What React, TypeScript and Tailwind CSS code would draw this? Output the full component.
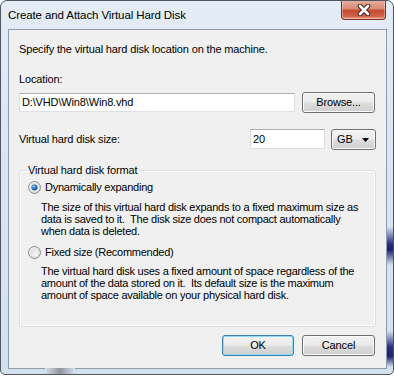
import React from "react";

const font = { fontFamily: '"Liberation Sans", Arial, sans-serif' };

const Radio = ({ checked }: { checked?: boolean }) => (
  <svg width="13" height="13" viewBox="0 0 13 13" className="shrink-0">
    <defs>
      <linearGradient id={checked ? "rOutA" : "rOutB"} x1="0" y1="0" x2="1" y2="1">
        <stop offset="0" stopColor="#f6f6f6" />
        <stop offset="1" stopColor="#d2d2d2" />
      </linearGradient>
      <linearGradient id="rIn" x1="0" y1="0" x2="1" y2="1">
        <stop offset="0" stopColor="#d9d9d9" />
        <stop offset="1" stopColor="#fafafa" />
      </linearGradient>
      <radialGradient id="rDot" cx="0.35" cy="0.3" r="0.75">
        <stop offset="0" stopColor="#b9ecff" />
        <stop offset="0.45" stopColor="#2a8ad4" />
        <stop offset="1" stopColor="#0d3f86" />
      </radialGradient>
    </defs>
    <circle cx="6.5" cy="6.5" r="6" fill={`url(#${checked ? "rOutA" : "rOutB"})`} stroke="#8c8c8c" strokeWidth="1" />
    <circle cx="6.5" cy="6.5" r="4" fill="url(#rIn)" />
    {checked && <circle cx="6.5" cy="6.5" r="2.8" fill="url(#rDot)" stroke="#1b4f8e" strokeWidth="0.5" />}
  </svg>
);

const Btn = ({ label, def, className }: { label: string; def?: boolean; className?: string }) => (
  <div
    className={`flex items-center justify-center h-[21px] rounded-[3px] border text-[11px] text-black bg-[linear-gradient(to_bottom,#f2f2f2_0%,#ebebeb_48%,#dddddd_52%,#cfcfcf_100%)] ${
      def
        ? "border-[#3c7fb1] shadow-[inset_0_0_0_1px_#8fdcf8]"
        : "border-[#707070] shadow-[inset_0_0_0_1px_#fbfbfb]"
    } ${className ?? ""}`}
  >
    {label}
  </div>
);

export default function App() {
  return (
    <div className="w-[394px] h-[376px] bg-white" style={font}>
      <div className="relative w-[394px] h-[375px] flex flex-col border border-[#4d5661] rounded-t-[7px] rounded-b-[5px] bg-[linear-gradient(to_bottom,#e4ecf6_0%,#dbe6f2_40%,#d3e0ee_100%)] overflow-hidden">
        {/* frame reflections */}
        <div className="absolute right-0 top-[226px] w-[6px] h-[38px] bg-[linear-gradient(to_bottom,#d3e0ee,#25307e_45%,#1a2470_60%,#d3e0ee)]" />
        <div className="absolute right-0 top-[330px] w-[6px] h-[36px] bg-[linear-gradient(to_bottom,#d3e0ee,#25307e_45%,#1a2470_70%,#d3e0ee)]" />
        <div className="absolute left-[44px] bottom-0 w-[30px] h-[6px] bg-[linear-gradient(to_right,#d3e0ee,#8f949b_50%,#d3e0ee)]" />

        {/* title bar */}
        <div className="flex items-start justify-between h-[28px] shrink-0">
          <div className="pl-[7px] pt-[7px] text-[11.5px] leading-[15px] text-black tracking-[-0.1px]">
            Create and Attach Virtual Hard Disk
          </div>
          <div className="-mt-[1px] mr-[7px] w-[45px] h-[20px] rounded-b-[4px] border border-[#7a2d1d] border-t-0 bg-[linear-gradient(to_bottom,#e9b1a2_0%,#d98a75_45%,#c54a30_55%,#d26148_85%,#e8a08a_100%)] shadow-[inset_0_0_0_1px_rgba(255,255,255,0.35)] flex items-center justify-center">
            <svg width="16" height="12" viewBox="0 0 16 12">
              <path d="M4 2 L12 10 M12 2 L4 10" stroke="#4a2418" strokeWidth="4.6" strokeLinecap="round" />
              <path d="M4 2 L12 10 M12 2 L4 10" stroke="#ffffff" strokeWidth="2.6" strokeLinecap="round" />
            </svg>
          </div>
        </div>

        {/* client area */}
        <div className="flex-1 ml-[7px] mr-[6px] mb-[5px] border border-[#8f9cab] bg-[#f0f0f0] pl-[10px] pr-[10px] pt-[12px] flex flex-col text-[11px] text-black tracking-[-0.15px]">
          <div className="leading-[15px] h-[15px]">Specify the virtual hard disk location on the machine.</div>
          <div className="leading-[15px] h-[15px] mt-[15px]">Location:</div>
          <div className="flex items-center h-[21px] mt-[5px]">
            <div className="w-[276px] h-[19px] bg-white border border-[#dbdfe6] border-t-[#abadb3] pl-[2px] leading-[17px]">
              D:\VHD\Win8\Win8.vhd
            </div>
            <Btn label="Browse..." className="ml-[7px] w-[73px]" />
          </div>
          <div className="flex items-start h-[21px] mt-[16px]">
            <div className="flex-1 leading-[21px]">Virtual hard disk size:</div>
            <div className="w-[75px] h-[20px] bg-white border border-[#dbdfe6] border-t-[#abadb3] pl-[2px] leading-[18px]">
              20
            </div>
            <div className="ml-[6px] w-[45px] h-[21px] rounded-[3px] border border-[#707070] shadow-[inset_0_0_0_1px_#fbfbfb] bg-[linear-gradient(to_bottom,#f2f2f2_0%,#ebebeb_48%,#dddddd_52%,#cfcfcf_100%)] flex items-center justify-between pl-[5px] pr-[6px]">
              <span>GB</span>
              <svg width="7" height="4" viewBox="0 0 7 4">
                <path d="M0 0 H7 L3.5 4 Z" fill="#000" />
              </svg>
            </div>
          </div>

          <fieldset className="mt-[13px] border border-[#d5dfe5] rounded-[3px] shadow-[inset_0_0_0_1px_#ffffff] pb-[25px]">
            <legend className="ml-[7px] px-[1px] leading-[15px]">Virtual hard disk format</legend>
            <div className="flex items-center gap-[4px] ml-[8px] mt-[2px] h-[15px] leading-[15px] tracking-[-0.25px]">
              <Radio checked />
              <span>Dynamically expanding</span>
            </div>
            <div className="ml-[21px] mt-[6px] leading-[12px] whitespace-nowrap tracking-[-0.25px]">
              The size of this virtual hard disk expands to a fixed maximum size as
              <br />
              data is saved to it.&nbsp; The disk size does not compact automatically
              <br />
              when data is deleted.
            </div>
            <div className="flex items-center gap-[4px] ml-[8px] mt-[8px] h-[15px] leading-[15px] tracking-[-0.25px]">
              <Radio />
              <span>Fixed size (Recommended)</span>
            </div>
            <div className="ml-[21px] mt-[5px] leading-[12px] whitespace-nowrap tracking-[-0.25px]">
              The virtual hard disk uses a fixed amount of space regardless of the
              <br />
              amount of the data stored on it.&nbsp; Its default size is the maximum
              <br />
              amount of space available on your physical hard disk.
            </div>
          </fieldset>

          <div className="flex justify-end mt-[8px] pr-[1px]">
            <Btn label="OK" def className="w-[72px]" />
            <Btn label="Cancel" className="ml-[8px] w-[73px]" />
          </div>
        </div>
      </div>
    </div>
  );
}
